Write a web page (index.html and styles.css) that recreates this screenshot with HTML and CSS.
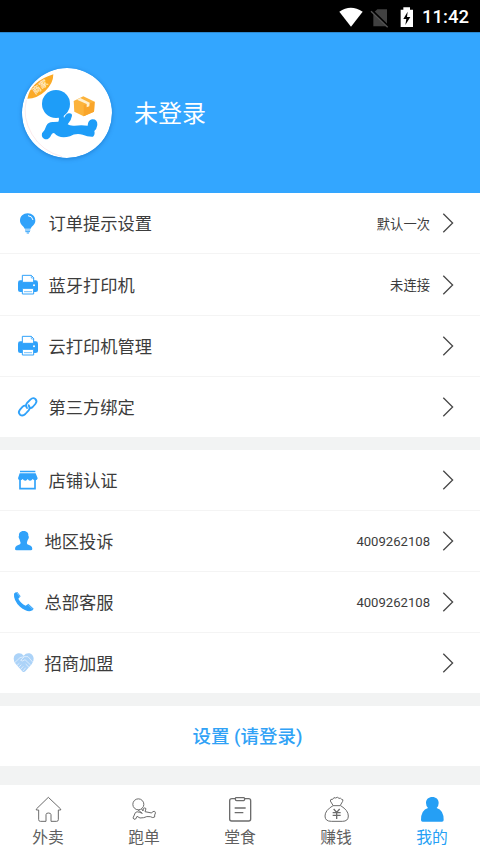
FILE: index.html
```html
<!DOCTYPE html>
<html lang="zh-CN">
<head>
<meta charset="utf-8">
<title>我的</title>
<link rel="stylesheet" href="styles.css">
</head>
<body>
<div class="app">
  <div class="status">
    <svg class="status-icons" viewBox="54 9 234 75">
      <path fill="#fff" d="M58 32Q92 9 128 32L93 77Z"/>
      <path fill="#414141" d="M172 25H201V76H160V36Z"/>
      <path d="M155 28L205 77" stroke="#000" stroke-width="8"/><path d="M153 31L203 79" stroke="#555" stroke-width="4"/>
      <path fill="#fff" d="M242 26H250V19H270V26H279V78H242Z"/>
      <path fill="#000" d="M263 32L250 54H259L256 72L271 48H261Z"/>
    </svg>
    <span class="clock">11:42</span>
  </div>
  <header class="profile">
    <svg class="avatar" viewBox="22 22 270 270">
      <defs><clipPath id="disc"><circle cx="157" cy="157" r="132"/></clipPath></defs>
      <circle cx="157" cy="157" r="135" fill="#fff"/>
      <path d="M35 118Q22 170 52 221T142 288" fill="none" stroke="#f8dfe2" stroke-width="2"/>
      <g clip-path="url(#disc)">
        <path d="M38 114Q48 62 116 41Q116 68 92 91T38 114Z" fill="#fbaa27"/>
        <text class="badge" x="76" y="88" text-anchor="middle" transform="rotate(-38 76 78)">商家</text>
      </g>
      <g fill="#1e9df8">
        <circle cx="124" cy="130" r="42"/>
        <path d="M130 160L149 158Q146 166 148 172Q153 160 162 158Q172 157 172 165Q170 179 159 191Q165 196 180 195Q200 193 219 195Q220 178 232 176Q249 175 248 193Q246 206 239 211Q242 222 235 228Q220 229 204 222Q182 217 166 227Q135 236 119 218Q115 214 110 222Q104 237 91 236Q79 231 82 218Q90 211 95 195Q101 183 116 184L131 183Q135 176 130 160Z"/>
      </g>
      <path d="M177 121L206 107L240 123L238 153L207 167L179 153Z" fill="#fcb33b"/>
      <path d="M207 134L240 123L238 153L207 167Z" fill="#f9a52a"/>
      <path d="M187 117L197 112L225 126L224 137L216 140L216 130Z" fill="#fff0cf"/>
    </svg>
    <span class="name">未登录</span>
  </header>

  <section class="group">
    <div class="row">
      <svg class="icon" viewBox="42 58 84 84"><path d="M83 71C70 71 60 80 60 93C60 105 71 108 74 117H92C95 108 106 105 106 93C106 80 96 71 83 71Z"/><path d="M75 121H91M76 126H90M80 130H87" stroke="#30a2fa" stroke-width="3"/><path class="cut" d="M84 78Q97 79 99 91" stroke-width="3"/></svg>
      <span class="label">订单提示设置</span><span class="value">默认一次</span>
      <svg class="chevron" viewBox="0 0 12 20"><path d="M1.3 .8L10.6 10L1.3 19.2"/></svg>
    </div>
    <div class="row tall">
      <svg class="icon" viewBox="42 241 84 84"><use href="#printer"/></svg>
      <span class="label">蓝牙打印机</span><span class="value">未连接</span>
      <svg class="chevron" viewBox="0 0 12 20"><path d="M1.3 .8L10.6 10L1.3 19.2"/></svg>
    </div>
    <div class="row">
      <svg class="icon" viewBox="42 241 84 84">
        <g id="printer"><path d="M54 276Q54 269 61 269H107Q114 269 114 276V298Q114 304 107 304H61Q54 304 54 298Z"/><path d="M67 275V254H94L101 261V275Z" fill="#fff" stroke="#30a2fa" stroke-width="3"/><path d="M94 254V262H102" fill="none" stroke="#30a2fa" stroke-width="2"/><path d="M67 293H101V310H67Z" fill="#fff" stroke="#30a2fa" stroke-width="3"/><path d="M72 303H96" stroke="#30a2fa" stroke-width="2"/><circle cx="102" cy="284" r="3" fill="#fff"/></g>
      </svg>
      <span class="label">云打印机管理</span>
      <svg class="chevron" viewBox="0 0 12 20"><path d="M1.3 .8L10.6 10L1.3 19.2"/></svg>
    </div>
    <div class="row short">
      <svg class="icon" viewBox="42 233 84 84"><g fill="none" stroke="#30a2fa" stroke-width="5.5" stroke-linecap="round" stroke-linejoin="round"><path d="M81 278Q75 270 81 263L91 253Q99 245 106 251Q113 258 106 266L98 275Q94 279 90 278"/><path d="M86 270Q92 278 86 285L76 296Q68 304 60 298Q53 291 60 283L68 274Q72 270 77 271"/></g></svg>
      <span class="label">第三方绑定</span>
      <svg class="chevron" viewBox="0 0 12 20"><path d="M1.3 .8L10.6 10L1.3 19.2"/></svg>
    </div>
  </section>

  <section class="group">
    <div class="row">
      <svg class="icon" viewBox="42 49 84 84"><path d="M60 63H106V68H60ZM59 71H107L113 86Q112 92 106 92Q101 92 98 88Q95 93 90 93Q86 93 83 88Q80 93 76 93Q71 93 68 88Q65 92 60 92Q55 92 54 86Z"/><path d="M60 91V117H105V91" fill="none" stroke="#30a2fa" stroke-width="5"/></svg>
      <span class="label">店铺认证</span>
      <svg class="chevron" viewBox="0 0 12 20"><path d="M1.3 .8L10.6 10L1.3 19.2"/></svg>
    </div>
    <div class="row tight">
      <svg class="icon" viewBox="30 230 84 84"><path d="M71 242C60 242 56 249 57 257Q54 258 57 264Q59 267 60 272Q64 279 60 282L50 286Q45 288 45 296Q45 300 50 300H92Q97 300 97 296Q97 288 92 286L82 282Q79 279 82 272Q84 267 86 264Q88 258 85 257C86 249 82 242 71 242Z"/></svg>
      <span class="label">地区投诉</span><span class="value number">4009262108</span>
      <svg class="chevron" viewBox="0 0 12 20"><path d="M1.3 .8L10.6 10L1.3 19.2"/></svg>
    </div>
    <div class="row tight">
      <svg class="icon" viewBox="30 55 84 84"><path d="M42 72Q45 67 52 67L62 80L55 87Q62 101 77 108L85 102L101 117Q99 123 92 124Q79 127 60 111Q40 92 42 72Z"/><path class="cut" d="M50 68L60 82M83 104L98 119" stroke-width="1"/></svg>
      <span class="label">总部客服</span><span class="value number">4009262108</span>
      <svg class="chevron" viewBox="0 0 12 20"><path d="M1.3 .8L10.6 10L1.3 19.2"/></svg>
    </div>
    <div class="row tight short">
      <svg class="icon" viewBox="30 236 84 84"><path d="M71 256Q64 247 54 249Q42 252 41 265Q41 274 48 282L68 304Q72 307 76 303L95 282Q102 273 101 264Q99 252 89 249Q78 247 71 256Z" fill="#acd3f8"/><path d="M43 278L60 262L73 259L62 270Q67 275 75 268L92 284M50 286L58 279M55 292L64 283M61 298L70 288M69 302L77 292M77 281L87 291M98 275L84 259L73 259" fill="none" stroke="#f1f8ff" stroke-width="2"/></svg>
      <span class="label">招商加盟</span>
      <svg class="chevron" viewBox="0 0 12 20"><path d="M1.3 .8L10.6 10L1.3 19.2"/></svg>
    </div>
  </section>

  <div class="settings">设置 (请登录)</div>

  <nav class="tabs">
    <div class="tab">
      <svg viewBox="96 39 96 96"><path d="M109 87L145 52L182 87V90H175V119Q175 124 170 124H153V104Q153 99 145 99Q138 99 138 104V124H121Q116 124 116 119V90H109Z"/></svg>
      <span>外卖</span>
    </div>
    <div class="tab">
      <svg viewBox="384 39 96 96"><circle cx="415" cy="73" r="16.5"/><path d="M425 87L429 93L430 86Q435 81 438 86L435 95L450 98L455 99Q457 93 464 94Q469 98 464 105V111Q459 115 451 110Q440 108 431 113Q419 117 411 109L407 117Q401 120 399 114L406 98Q410 93 419 97L427 100Q420 94 414 90"/></svg>
      <span>跑单</span>
    </div>
    <div class="tab">
      <svg viewBox="-48 39 96 96"><g stroke-width="4"><path d="M-14 56H-24Q-31 56 -31 62V117Q-31 123 -25 123H26Q32 123 32 117V62Q32 56 26 56H15"/><path d="M-10 53H11Q14 53 14 57T11 62H-10Q-14 62 -14 57T-10 53ZM-16 84H17M-16 98H10"/></g></svg>
      <span>堂食</span>
    </div>
    <div class="tab">
      <svg viewBox="240 39 96 96"><path d="M279 76L271 63Q271 56 278 58Q281 50 287 54Q292 49 297 55Q302 53 305 58Q311 58 308 64L301 76M279 77H302Q325 91 325 108Q325 124 307 124H274Q255 124 255 108Q255 91 279 77Z"/><path d="M281 87L290 97L299 87M278 98H302M278 106H302M290 97V117" stroke-width="4"/></svg>
      <span>赚钱</span>
    </div>
    <div class="tab active">
      <svg viewBox="528 39 96 96"><path d="M577 51C566 51 558 58 558 69Q558 78 564 84Q543 90 543 120Q543 125 548 125H606Q611 125 611 120Q611 90 590 84Q596 78 596 69C596 58 588 51 577 51Z"/></svg>
      <span>我的</span>
    </div>
  </nav>
</div>
</body>
</html>
```

FILE: styles.css
```css
* { box-sizing: border-box; }
body {
  margin: 0;
  background: #f2f3f3;
  font-family: Roboto, "Noto Sans CJK SC", sans-serif;
  color: #3c3c3c;
}
.app {
  width: 480px;
  height: 855px;
  display: flex;
  flex-direction: column;
  overflow: hidden;
}
.status {
  height: 32px;
  background: #000;
  display: flex;
  align-items: center;
  justify-content: flex-end;
  gap: 6px;
  padding: 0 11px 0 0;
  color: #fff;
}
.status-icons { width: 78px; height: 25px; }
.clock {
  width: 47px;
  font-size: 18.5px;
  line-height: 32px;
  font-weight: 500;
  padding-top: 2px;
  white-space: nowrap;
}
.profile {
  height: 161px;
  background: #33a6ff;
  border-top: 1px solid #2b88cf;
  display: flex;
  align-items: center;
  gap: 22px;
  padding-left: 22px;
}
.avatar {
  width: 90px;
  height: 90px;
  border-radius: 50%;
  box-shadow: 0 1px 4px rgba(0, 60, 130, .35);
}
.badge { font-size: 26px; font-weight: 700; fill: #ffe9bf; }
.name { font-size: 24px; line-height: 36px; padding-top: 2px; color: #fff; }
.group { background: #fff; margin-bottom: 13px; }
.row {
  height: 61px;
  display: flex;
  align-items: center;
  padding: 0 26px 0 14px;
  border-bottom: 1px solid #f4f4f4;
}
.row.tall { height: 62px; }
.row.short { height: 60px; }
.row:last-child { border-bottom-color: #fff; }
.row.tight { padding-left: 10px; }
.icon { width: 28px; height: 28px; fill: #30a2fa; }
.icon .cut { fill: none; stroke: #fff; }
.label { margin-left: 6.5px; padding-bottom: 1px; flex: 1; font-size: 17.25px; }
.value { font-size: 13.3px; }
.value.number { font-size: 13.1px; }
.chevron {
  width: 12px;
  height: 20px;
  margin-left: 12px;
  fill: none;
  stroke: #484848;
  stroke-width: 1.3;
}
.settings {
  height: 60px;
  background: #fff;
  color: #30a2f6;
  font-size: 18.5px;
  font-weight: 500;
  line-height: 62px;
  text-align: center;
  padding-left: 15px;
}
.tabs {
  margin-top: auto;
  height: 70px;
  background: #fff;
  display: grid;
  grid-template-columns: repeat(5, 1fr);
}
.tab {
  display: flex;
  flex-direction: column;
  align-items: center;
  padding-top: 8px;
  font-size: 15.8px;
  line-height: 25px;
  color: #606060;
}
.tab svg {
  width: 32px;
  height: 32px;
  fill: none;
  stroke: #6c6c6c;
  stroke-width: 3;
  stroke-linejoin: round;
}
.tab.active { color: #259ff5; }
.tab.active svg { fill: #259ff5; stroke: none; }
```
